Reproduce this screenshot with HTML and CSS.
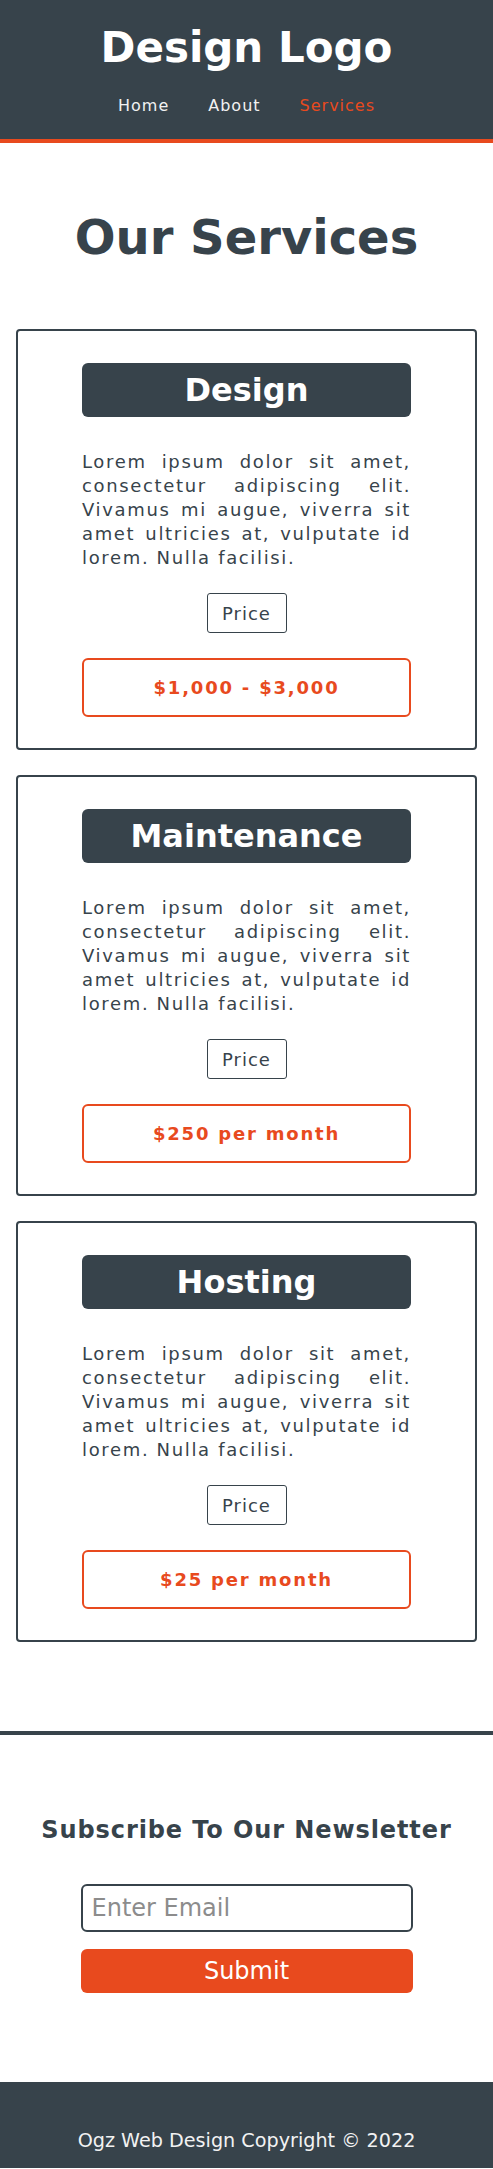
FILE: index.html
```html
<!DOCTYPE html>
<html lang="en">
<head>
<meta charset="utf-8">
<title>Our Services</title>
<link rel="stylesheet" href="styles.css">
</head>
<body>
<header class="site-header">
  <h1 class="logo">Design Logo</h1>
  <nav class="nav">
    <a class="nav-link" href="#">Home</a>
    <a class="nav-link" href="#">About</a>
    <a class="nav-link active" href="#">Services</a>
  </nav>
</header>

<main class="services">
  <h2 class="page-title">Our Services</h2>

  <div class="cards">
    <section class="card">
      <h3 class="card-title">Design</h3>
      <p class="card-text">Lorem ipsum dolor sit amet, consectetur adipiscing elit. Vivamus mi augue, viverra sit amet ultricies at, vulputate id lorem. Nulla facilisi.</p>
      <button class="price-btn" type="button">Price</button>
      <div class="price-box">$1,000 - $3,000</div>
    </section>

    <section class="card">
      <h3 class="card-title">Maintenance</h3>
      <p class="card-text">Lorem ipsum dolor sit amet, consectetur adipiscing elit. Vivamus mi augue, viverra sit amet ultricies at, vulputate id lorem. Nulla facilisi.</p>
      <button class="price-btn" type="button">Price</button>
      <div class="price-box">$250 per month</div>
    </section>

    <section class="card">
      <h3 class="card-title">Hosting</h3>
      <p class="card-text">Lorem ipsum dolor sit amet, consectetur adipiscing elit. Vivamus mi augue, viverra sit amet ultricies at, vulputate id lorem. Nulla facilisi.</p>
      <button class="price-btn" type="button">Price</button>
      <div class="price-box">$25 per month</div>
    </section>
  </div>
</main>

<section class="newsletter">
  <h2 class="newsletter-title">Subscribe To Our Newsletter</h2>
  <form class="newsletter-form">
    <input class="email-input" type="email" placeholder="Enter Email">
    <button class="submit-btn" type="button">Submit</button>
  </form>
</section>

<footer class="site-footer">
  <p class="copyright">Ogz Web Design Copyright © 2022</p>
</footer>
</body>
</html>
```

FILE: styles.css
```css
* {
  box-sizing: border-box;
}

html, body {
  margin: 0;
  padding: 0;
}

body {
  font-family: "DejaVu Sans", "Liberation Sans", sans-serif;
  color: #37434b;
  background: #ffffff;
}

.site-header {
  background: #37434b;
  border-bottom: 4px solid #e84a1e;
  padding: 24px 0 23px;
  text-align: center;
}

.logo {
  margin: 0 0 24px;
  font-size: 42px;
  line-height: 48px;
  font-weight: bold;
  color: #ffffff;
}

.nav {
  display: flex;
  justify-content: center;
  gap: 39px;
  line-height: 20px;
}

.nav-link {
  font-size: 16px;
  letter-spacing: 1px;
  color: #f2f2f2;
  text-decoration: none;
}

.nav-link.active {
  color: #e84a1e;
}

.services {
  padding-top: 66px;
}

.page-title {
  margin: 0 0 64px;
  font-size: 48px;
  line-height: 56px;
  font-weight: bold;
  text-align: center;
  color: #37434b;
}

.cards {
  display: flex;
  flex-direction: column;
  gap: 25px;
  padding: 0 16px;
}

.card {
  border: 2px solid #37434b;
  border-radius: 4px;
  padding: 32px 64px 31px;
  display: flex;
  flex-direction: column;
  align-items: center;
}

.card-title {
  width: 100%;
  margin: 0;
  background: #37434b;
  color: #ffffff;
  border-radius: 6px;
  font-size: 32px;
  font-weight: bold;
  height: 54px;
  line-height: 54px;
  text-align: center;
}

.card-text {
  width: 100%;
  margin: 33px 0 23px;
  font-size: 18px;
  line-height: 24px;
  letter-spacing: 1.65px;
  text-align: justify;
  color: #37434b;
}

.price-btn {
  width: 80px;
  height: 40px;
  padding: 0;
  border: 1px solid #37434b;
  border-radius: 3px;
  background: #ffffff;
  font-family: "DejaVu Sans", sans-serif;
  font-size: 18px;
  letter-spacing: 1px;
  color: #37434b;
}

.price-box {
  width: 100%;
  margin-top: 25px;
  height: 59px;
  border: 2px solid #e84a1e;
  border-radius: 6px;
  display: flex;
  align-items: center;
  justify-content: center;
  font-size: 18px;
  font-weight: bold;
  letter-spacing: 1.8px;
  color: #e84a1e;
}

.newsletter {
  margin-top: 89px;
  border-top: 4px solid #37434b;
  padding: 81px 0 89px;
  text-align: center;
}

.newsletter-title {
  margin: 0 0 40px;
  font-size: 24px;
  line-height: 28px;
  font-weight: bold;
  letter-spacing: 0.9px;
  color: #37434b;
}

.newsletter-form {
  width: 332px;
  margin: 0 auto;
  display: flex;
  flex-direction: column;
  gap: 17px;
}

.email-input {
  height: 48px;
  border: 2px solid #37434b;
  border-radius: 6px;
  padding: 0 9px;
  font-family: "DejaVu Sans", sans-serif;
  font-size: 24px;
  color: #37434b;
  background: #ffffff;
}

.email-input::placeholder {
  color: #8c8c8c;
}

.submit-btn {
  height: 44px;
  border: none;
  border-radius: 6px;
  background: #e84a1e;
  color: #ffffff;
  font-family: "DejaVu Sans", sans-serif;
  font-size: 24px;
}

.site-footer {
  background: #37434b;
  padding: 48px 0 16px;
  text-align: center;
}

.copyright {
  margin: 0;
  font-size: 19.2px;
  line-height: 22px;
  color: #f2f2f2;
}
```
